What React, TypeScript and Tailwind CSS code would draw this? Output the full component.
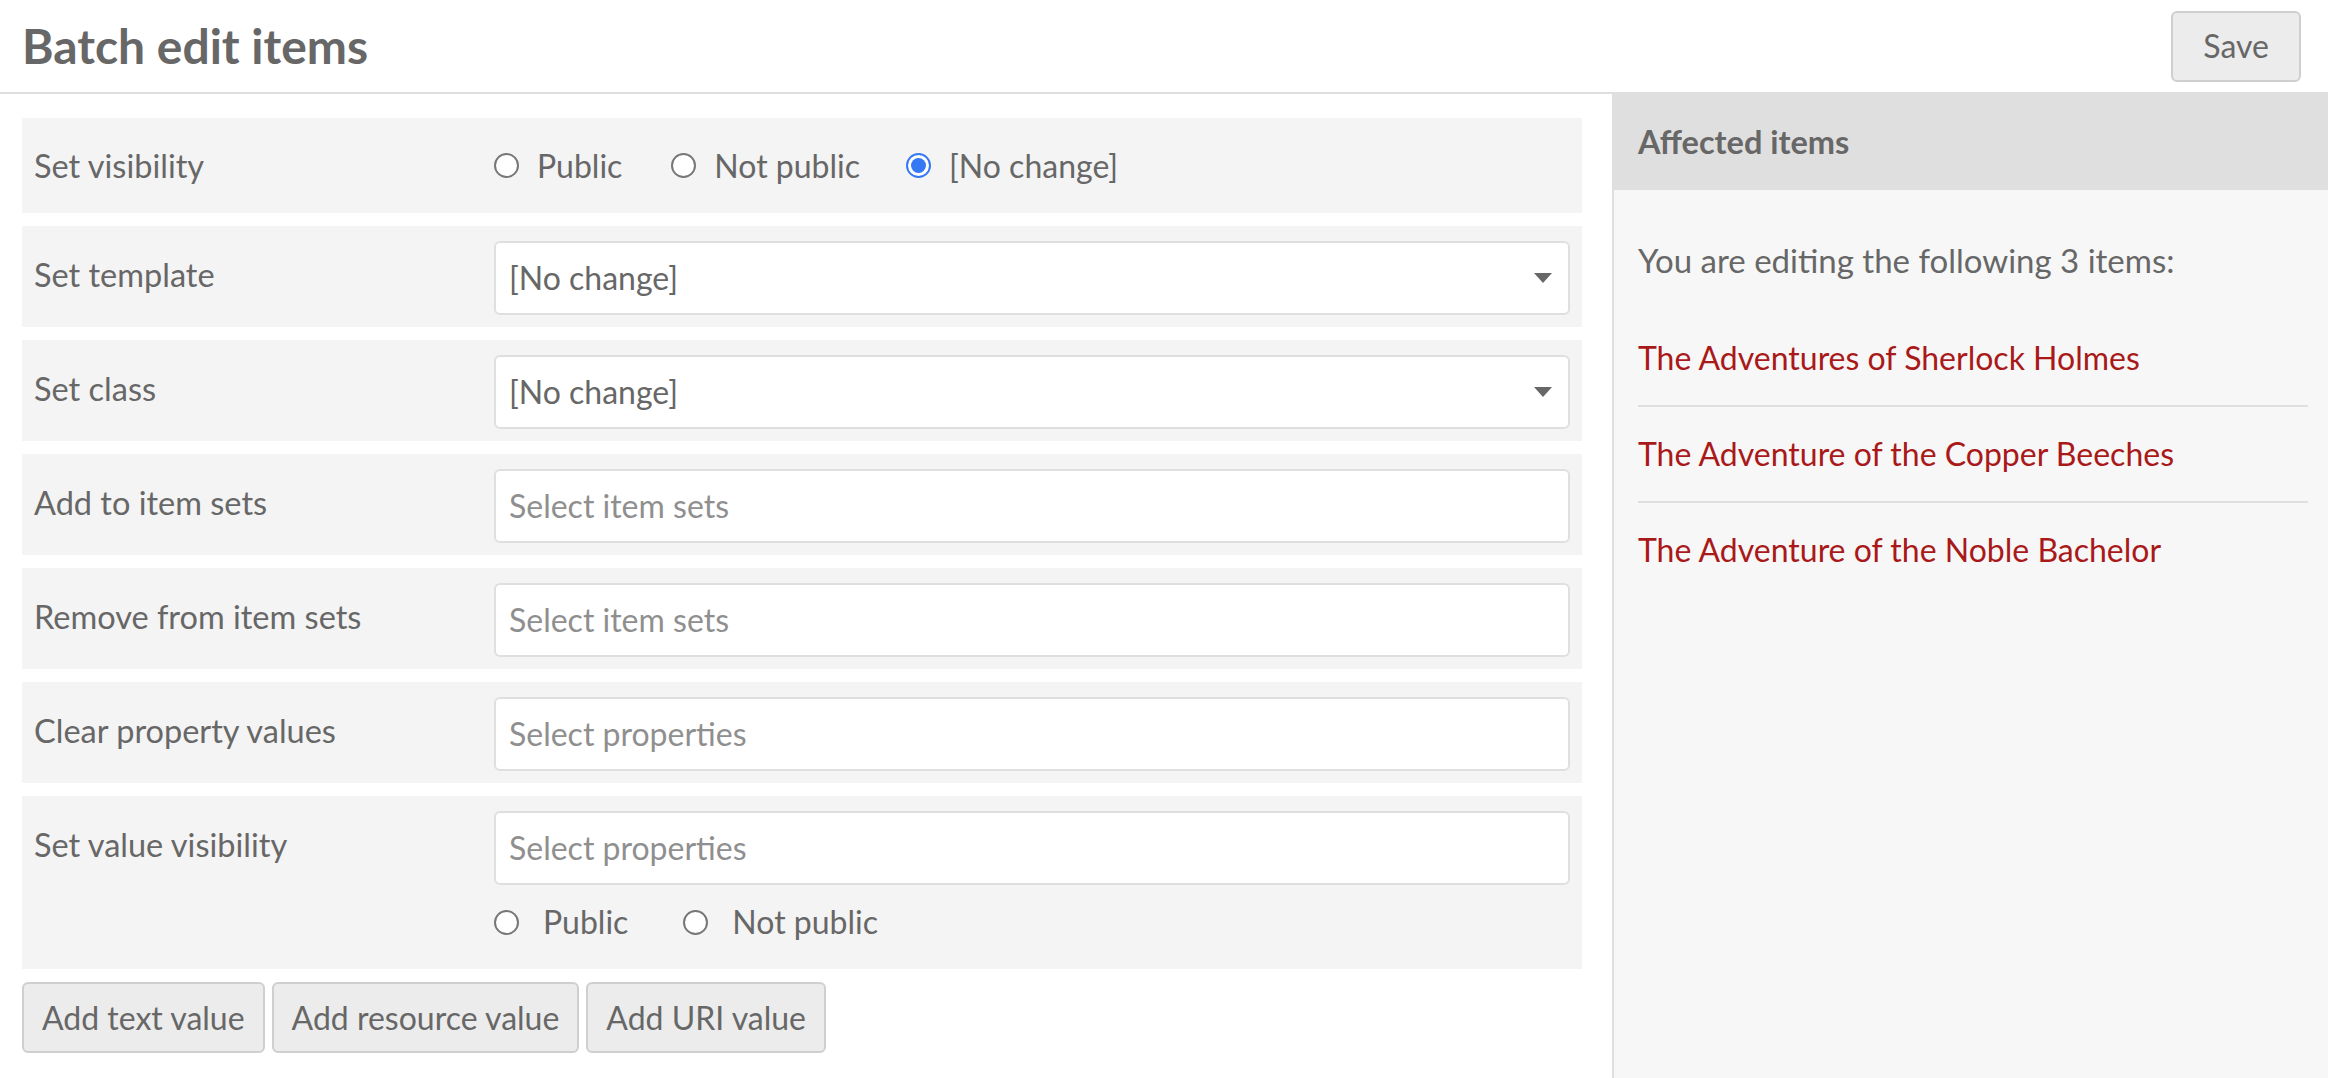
import { ReactNode } from "react";

const items = [
  "The Adventures of Sherlock Holmes",
  "The Adventure of the Copper Beeches",
  "The Adventure of the Noble Bachelor",
];

const Radio = ({ checked = false }: { checked?: boolean }) =>
  checked ? (
    <span className="w-[25px] h-[25px] rounded-full border-[2px] border-[#3478f6] bg-white flex items-center justify-center shrink-0">
      <span className="w-[15px] h-[15px] rounded-full bg-[#3478f6]" />
    </span>
  ) : (
    <span className="w-[25px] h-[25px] rounded-full border-[2px] border-[#777777] bg-white shrink-0" />
  );

const Choice = ({ label, checked, gap = "gap-[18px]" }: { label: string; checked?: boolean; gap?: string }) => (
  <label className={`flex items-center ${gap}`}>
    <Radio checked={checked} />
    <span>{label}</span>
  </label>
);

const Row = ({ label, children, className = "" }: { label: string; children: ReactNode; className?: string }) => (
  <div className={`flex bg-[#f4f4f4] px-[12px] pt-[15px] pb-[12px] ${className}`}>
    <div className="w-[460px] shrink-0 pt-[12px] leading-[44px] text-[32.5px]">{label}</div>
    <div className="flex-1">{children}</div>
  </div>
);

const SelectBox = ({ value }: { value: string }) => (
  <div className="h-[74px] bg-white border-[2px] border-[#dfdfdf] rounded-[6px] flex items-center justify-between pl-[13px] pr-[16px]">
    <span>{value}</span>
    <svg width="18" height="10" viewBox="0 0 18 10">
      <path d="M0 0 H18 L9 10 Z" fill="#676767" />
    </svg>
  </div>
);

const MultiBox = ({ placeholder }: { placeholder: string }) => (
  <div className="h-[74px] bg-white border-[2px] border-[#dfdfdf] rounded-[6px] flex items-center pl-[13px]">
    <span className="text-[#8f8f8f]">{placeholder}</span>
  </div>
);

const Button = ({ children, className = "px-[18px]" }: { children: ReactNode; className?: string }) => (
  <button className={`h-[71px] bg-[#ececec] border-[2px] border-[#cfcfcf] rounded-[6px] text-[#676767] ${className}`}>
    {children}
  </button>
);

export default function App() {
  return (
    <div
      className="min-h-screen bg-white text-[#676767] text-[32px]"
      style={{ fontFamily: "Lato, 'Open Sans', sans-serif" }}
    >
      <header className="h-[94px] flex items-center justify-between pl-[22px] pr-[27px] border-b-[2px] border-[#dfdfdf]">
        <h1 className="text-[48px] font-bold leading-none">Batch edit items</h1>
        <Button className="px-[30px]">Save</Button>
      </header>

      <div className="flex min-h-[984px]">
        <div className="flex-1 pl-[22px] pr-[30px] pt-[24px] flex flex-col gap-[13px]">
          <div className="flex items-center bg-[#f4f4f4] px-[12px] h-[95px]">
            <div className="w-[460px] shrink-0 leading-[44px] text-[32.5px]">Set visibility</div>
            <div className="flex items-center leading-[44px]">
              <Choice label="Public" />
              <span className="w-[49px]" />
              <Choice label="Not public" />
              <span className="w-[46px]" />
              <Choice label="[No change]" checked />
            </div>
          </div>

          <Row label="Set template">
            <SelectBox value="[No change]" />
          </Row>
          <Row label="Set class">
            <SelectBox value="[No change]" />
          </Row>
          <Row label="Add to item sets">
            <MultiBox placeholder="Select item sets" />
          </Row>
          <Row label="Remove from item sets">
            <MultiBox placeholder="Select item sets" />
          </Row>
          <Row label="Clear property values">
            <MultiBox placeholder="Select properties" />
          </Row>
          <Row label="Set value visibility" className="pb-[25px]">
            <MultiBox placeholder="Select properties" />
            <div className="flex items-center gap-[55px] mt-[15px] leading-[44px]">
              <Choice label="Public" gap="gap-[24px]" />
              <Choice label="Not public" gap="gap-[24px]" />
            </div>
          </Row>

          <div className="flex gap-[7px]">
            <Button>Add text value</Button>
            <Button>Add resource value</Button>
            <Button>Add URI value</Button>
          </div>
        </div>

        <aside className="w-[716px] shrink-0 bg-[#f7f7f7] border-l-[2px] border-[#dfdfdf]">
          <div className="h-[96px] bg-[#dfdfdf] flex items-center pl-[24px] font-bold text-[32.5px]">
            Affected items
          </div>
          <div className="pl-[24px] pr-[20px] pt-[48px]">
            <p className="leading-[44px] text-[33px]">You are editing the following 3 items:</p>
            <ul className="mt-[29px]">
              {items.map((title, i) => (
                <li
                  key={title}
                  className={`py-[25px] leading-[44px] ${i < items.length - 1 ? "border-b-[2px] border-[#dfdfdf]" : ""}`}
                >
                  <a href="#" className="text-[#a91919]">
                    {title}
                  </a>
                </li>
              ))}
            </ul>
          </div>
        </aside>
      </div>
    </div>
  );
}
